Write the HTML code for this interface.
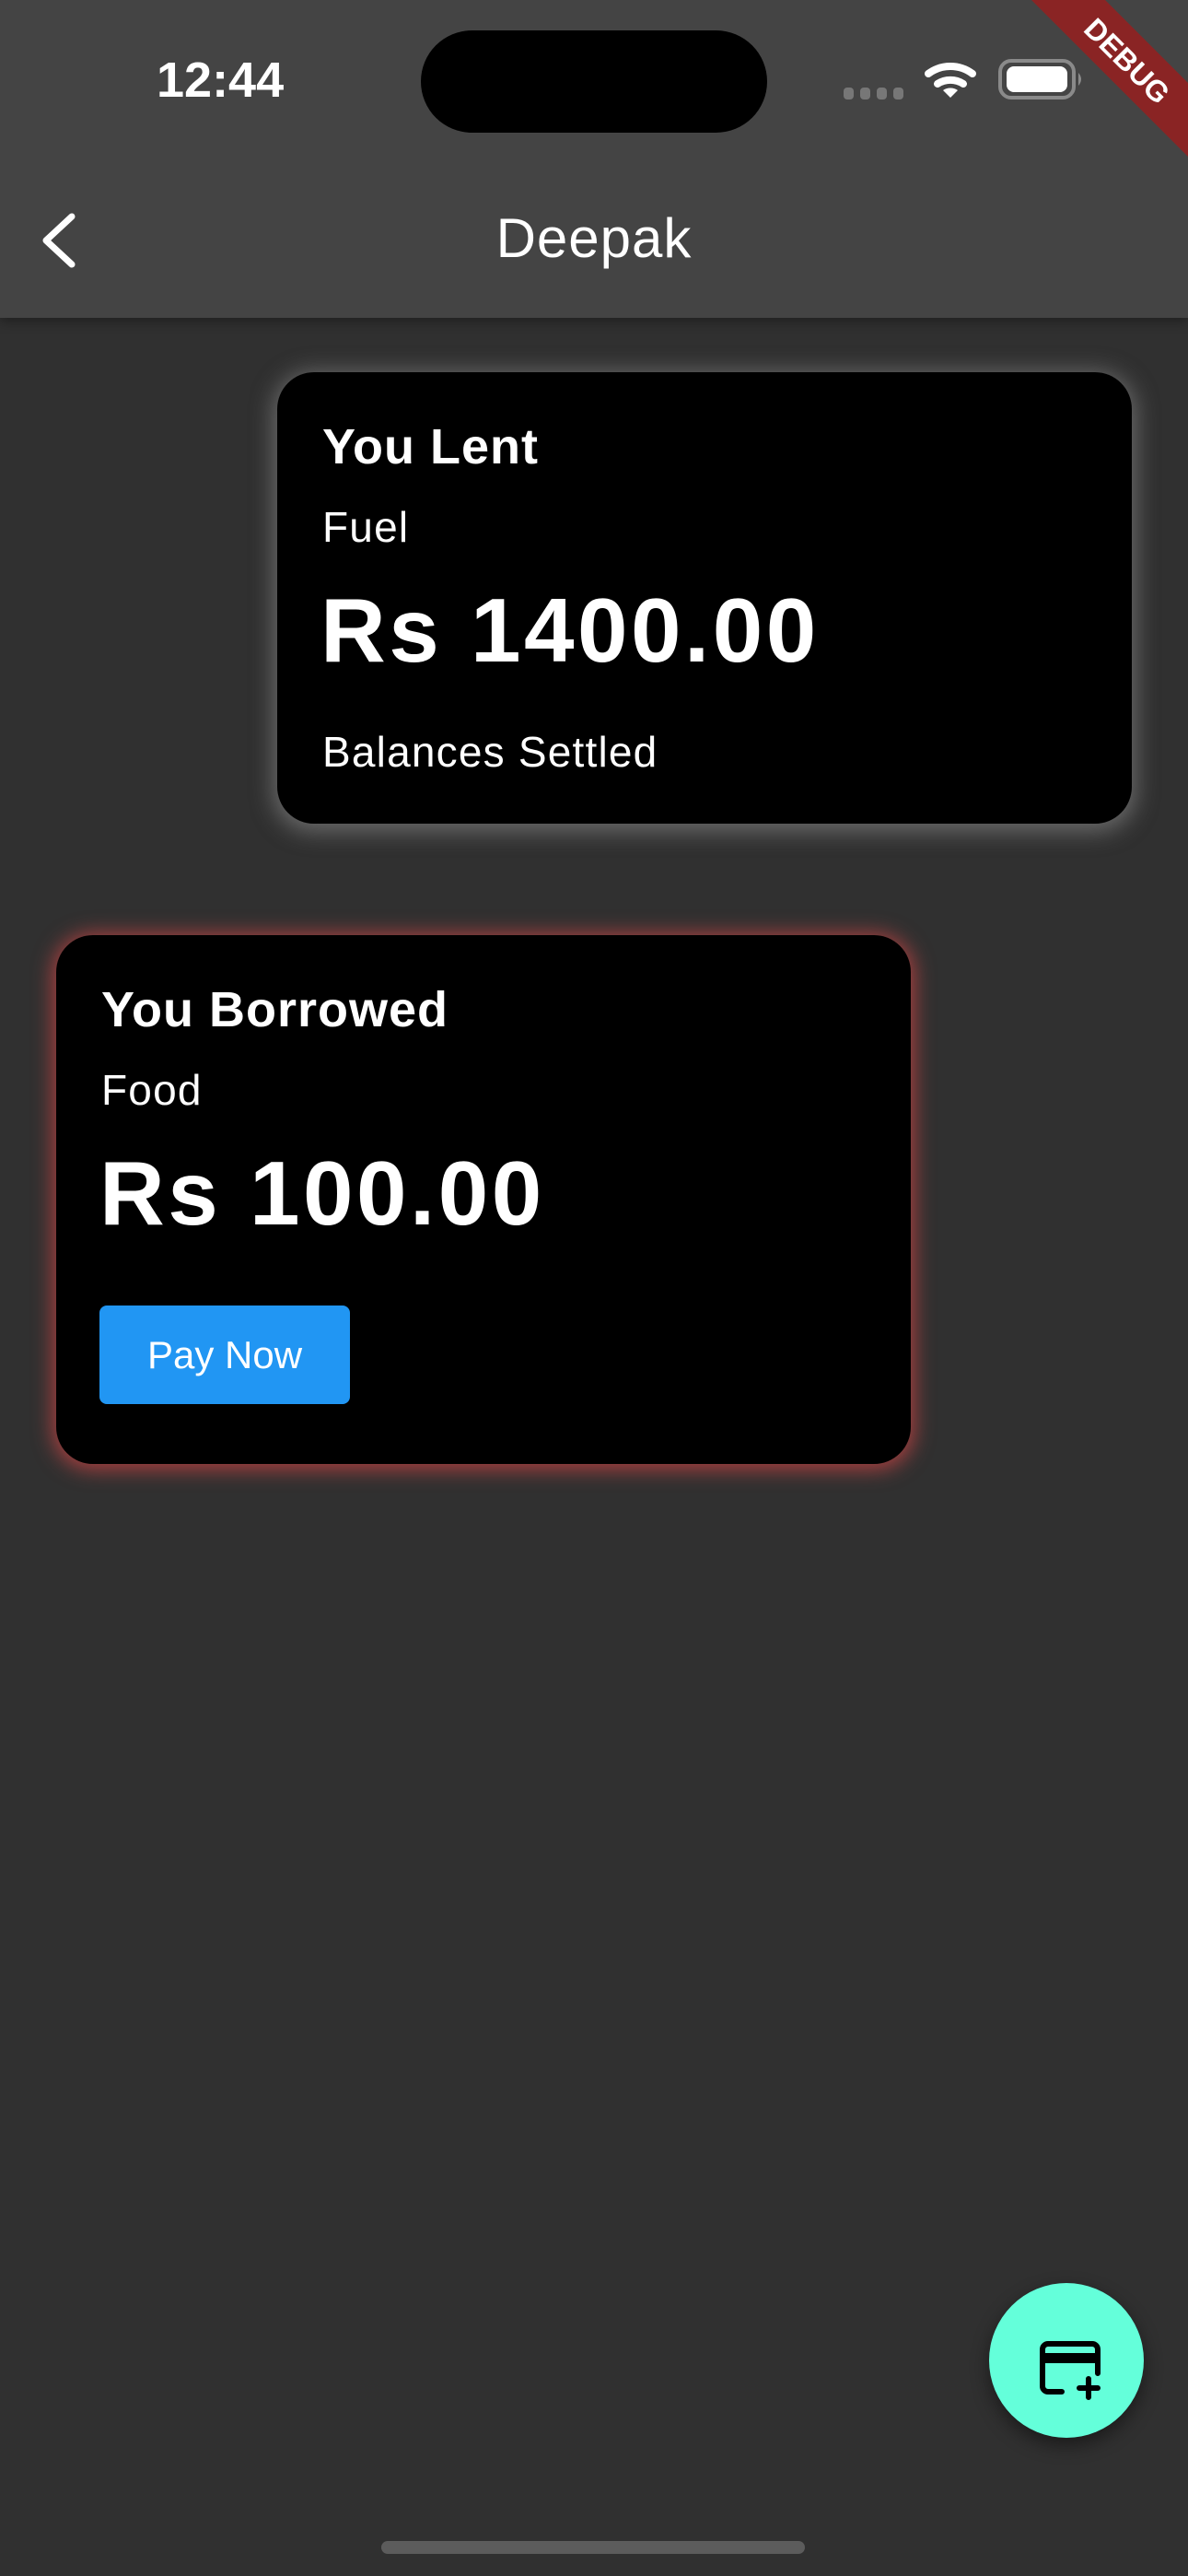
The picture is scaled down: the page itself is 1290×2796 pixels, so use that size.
<!DOCTYPE html>
<html><head><meta charset="utf-8"><style>
*{margin:0;padding:0;box-sizing:border-box}
body{width:1290px;height:2796px;background:#303030;position:relative;overflow:hidden;font-family:"Liberation Sans",sans-serif;color:#fff}
.bar{position:absolute;left:0;top:0;width:1290px;height:345px;background:#444;box-shadow:0 4px 12px rgba(0,0,0,.35)}
.island{position:absolute;left:457px;top:33px;width:376px;height:111px;border-radius:56px;background:#000}
.time{position:absolute;left:170px;top:56px;font-size:54px;font-weight:bold;letter-spacing:0px}
.title{position:absolute;left:0;width:1290px;text-align:center;top:224px;font-size:60px;letter-spacing:1px}
.card{position:absolute;background:#000;border-radius:40px}
.c1{left:301px;top:404px;width:928px;height:490px;box-shadow:0 4px 24px 5px rgba(150,150,150,.55)}
.c2{left:61px;top:1015px;width:928px;height:574px;box-shadow:0 2px 22px 4px rgba(220,70,70,.7)}
.h{position:absolute;left:49px;font-size:54px;font-weight:bold;letter-spacing:1px}
.s{position:absolute;left:49px;font-size:46px;letter-spacing:1.2px}
.a{position:absolute;left:47px;font-size:98px;font-weight:bold;letter-spacing:3.5px}
.btn{position:absolute;left:47px;top:402px;width:272px;height:107px;background:#2196F3;border-radius:8px;font-size:42px;text-align:center;line-height:107px}
.fab{position:absolute;left:1074px;top:2478px;width:168px;height:168px;border-radius:50%;background:#64FFDA;box-shadow:0 8px 20px rgba(0,0,0,.45)}
.home{position:absolute;left:414px;top:2758px;width:460px;height:14px;border-radius:7px;background:#5c5c5c}
</style></head><body>
<div class="bar"></div>
<div class="island"></div>
<div class="time">12:44</div>
<svg style="position:absolute;left:0;top:0" width="1290" height="345">
<g fill="#777"><rect x="916" y="95" width="11" height="13" rx="4"/><rect x="934" y="95" width="11" height="13" rx="4"/><rect x="952" y="95" width="11" height="13" rx="4"/><rect x="970" y="95" width="11" height="13" rx="4"/></g>
<g fill="none" stroke="#fff" stroke-width="8" stroke-linecap="round">
<path d="M1008 80 A40 40 0 0 1 1056 80"/><path d="M1018 91 A26 26 0 0 1 1046 91"/></g>
<path d="M1024 98 L1032 106 L1040 98 A14 14 0 0 0 1024 98Z" fill="#fff"/>
<rect x="1086" y="66" width="80" height="40" rx="12" fill="none" stroke="#8a8a8a" stroke-width="4"/>
<rect x="1093" y="72" width="66" height="28" rx="8" fill="#fff"/>
<path d="M1171 79 q6 7 0 14z" fill="#8a8a8a"/>
<path d="M1120 0 L1200 0 L1290 90 L1290 170Z" fill="#8a2424"/>
<text x="1222" y="68" transform="rotate(45 1222 68)" font-family="Liberation Sans" font-weight="bold" font-size="32" fill="#fff" text-anchor="middle" dominant-baseline="middle">DEBUG</text>
<path d="M78 235 L50 261 L78 287" fill="none" stroke="#fff" stroke-width="7" stroke-linecap="round" stroke-linejoin="round"/>
</svg>
<div class="title">Deepak</div>
<div class="card c1">
<div class="h" style="top:50px">You Lent</div>
<div class="s" style="top:141px">Fuel</div>
<div class="a" style="top:224px">Rs 1400.00</div>
<div class="s" style="top:385px">Balances Settled</div>
</div>
<div class="card c2">
<div class="h" style="top:50px">You Borrowed</div>
<div class="s" style="top:141px">Food</div>
<div class="a" style="top:224px">Rs 100.00</div>
<div class="btn">Pay Now</div>
</div>
<div class="fab">
<svg width="168" height="168" viewBox="0 0 168 168">
<path d="M79 118 H64 a6 6 0 0 1 -6 -6 V72 a6 6 0 0 1 6 -6 H112 a6 6 0 0 1 6 6 V98" fill="none" stroke="#000" stroke-width="6" stroke-linecap="round" stroke-linejoin="round"/>
<rect x="58" y="76" width="60" height="11" fill="#000"/>
<path d="M108 104 V124 M98 114 H118" stroke="#000" stroke-width="6" stroke-linecap="round"/>
</svg>
</div>
<div class="home"></div>
</body></html>
